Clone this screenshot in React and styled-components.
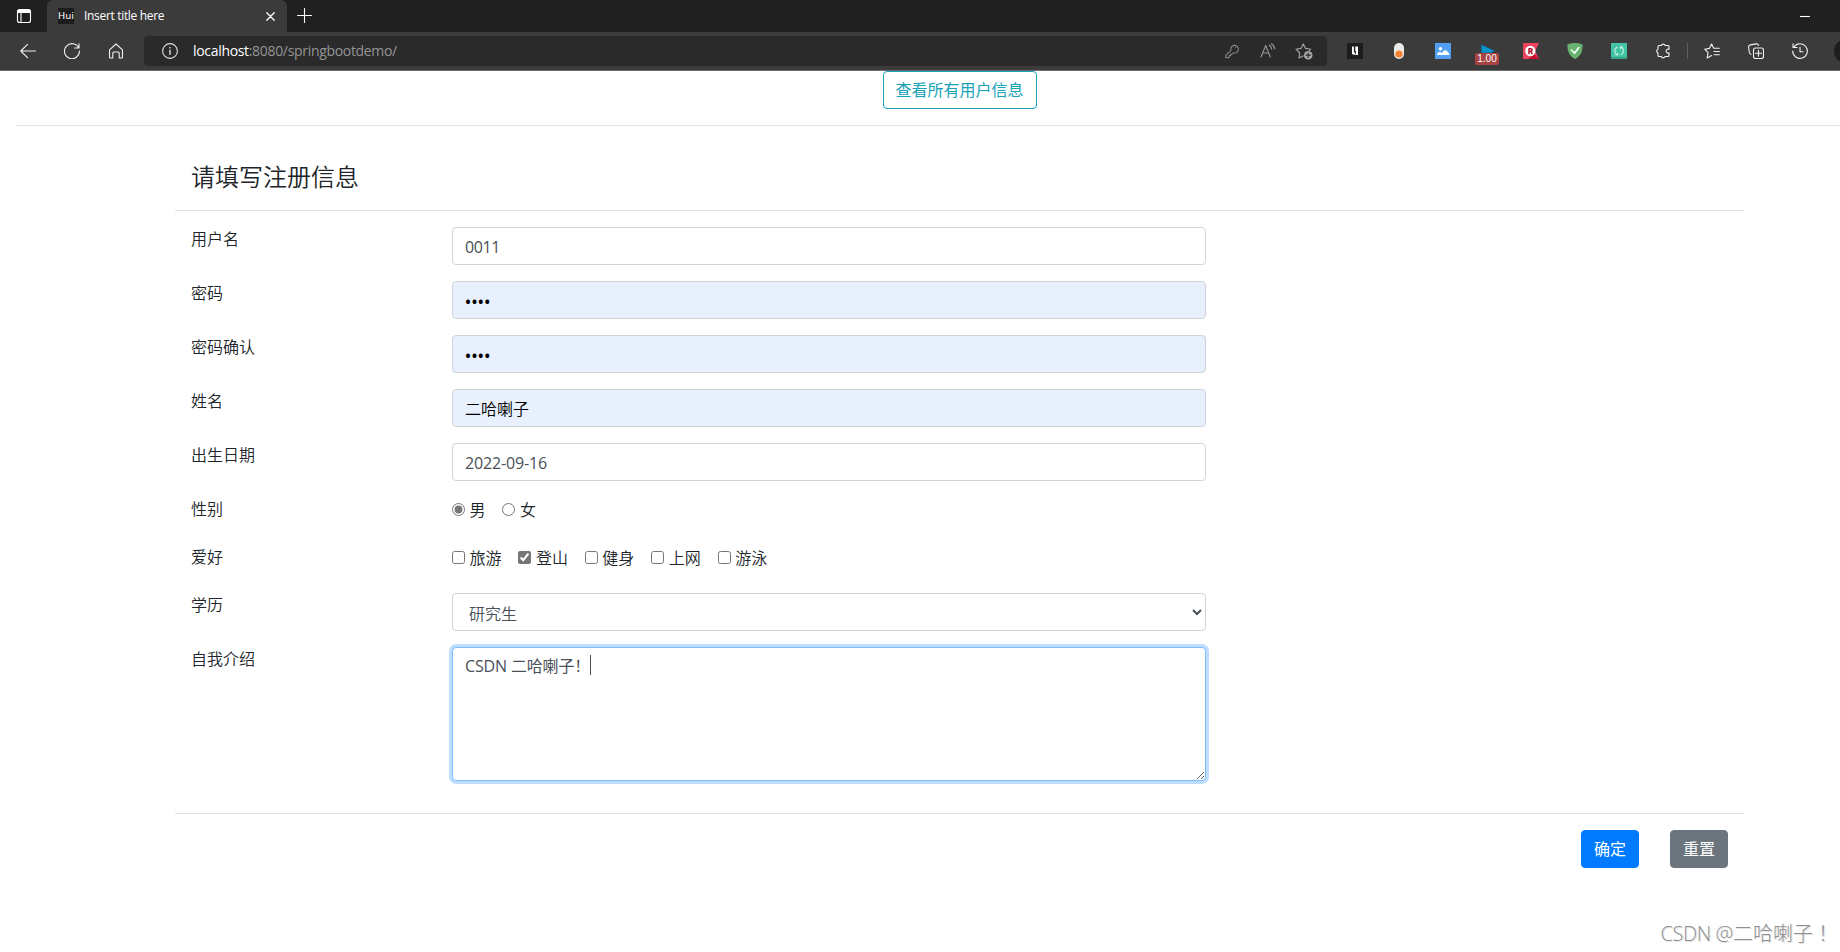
import React from "react";
import styled, { createGlobalStyle } from "styled-components";

const GlobalStyle = createGlobalStyle`
  * {
    box-sizing: border-box;
  }

  body {
    margin: 0;
    overflow: hidden;
    background: #fff;
    color: #212529;
    font-family: "Open Sans", "Noto Sans CJK SC", sans-serif;
    font-size: 16px;
    line-height: 24px;
  }
`;

// Browser window
const Window = styled.div`
  position: relative;
  width: 1840px;
  height: 952px;
  overflow: hidden;
  background: #fff;
`;

const TitleBar = styled.div`
  display: flex;
  height: 32px;
  background: #202020;
  color: #fff;
`;

const TitleCell = styled.div`
  display: flex;
  align-items: center;
  justify-content: center;
  width: ${(props) => props.$width}px;
  height: 32px;
`;

const Tab = styled.div`
  display: flex;
  align-items: center;
  width: 240px;
  padding: 0 11px;
  border-radius: 6px 6px 0 0;
  background: #3b3b3b;
  font-size: 12px;
  letter-spacing: -0.32px;
`;

const Favicon = styled.span`
  display: flex;
  align-items: center;
  justify-content: center;
  width: 16px;
  height: 16px;
  margin-right: 10px;
  background: #1d1d1f;
  font-family: "DejaVu Sans", sans-serif;
  font-size: 9.5px;
  letter-spacing: 0;
`;

const TabTitle = styled.span`
  flex: 1;
  line-height: 16px;
`;

const Toolbar = styled.div`
  display: flex;
  align-items: center;
  width: 1880px;
  height: 39px;
  padding-left: 6px;
  border-bottom: 1px solid #6c6a6b;
  background: #3b3b3b;
  color: #f2f2f2;
`;

const ToolCell = styled.div`
  display: flex;
  flex: none;
  align-items: center;
  justify-content: center;
  width: ${(props) => props.$width || 44}px;
  height: 38px;
`;

const AddressBar = styled.div`
  display: flex;
  align-items: center;
  width: 1183px;
  height: 30px;
  margin: 0 6px;
  padding: 0 5px 0 8px;
  border-radius: 4px;
  background: #2a2a2a;
  color: #959595;
`;

const Url = styled.span`
  flex: 1;
  padding-left: 5px;
  font-size: 14px;
  letter-spacing: -0.32px;

  b {
    color: #fff;
    font-weight: 400;
  }
`;

const Divider = styled.span`
  flex: none;
  width: 1px;
  height: 16px;
  margin: 0 2px;
  background: #5e5e5e;
`;

const SpeedIcon = styled.span`
  display: flex;
  flex-direction: column;
  align-items: center;
  padding-top: 7px;
`;

const SpeedBadge = styled.span`
  width: 24px;
  height: 12px;
  border-radius: 2px;
  background: #a84343;
  color: #fff;
  font-family: "Liberation Sans", sans-serif;
  font-size: 10px;
  line-height: 12px;
  text-align: center;
`;

const Avatar = styled.span`
  width: 24px;
  height: 24px;
  margin-left: 12px;
  flex: none;
  border-radius: 50%;
  background: #1e1e1e;
`;

// Page
const Page = styled.main`
  width: 1919px;
`;

const TopLine = styled.div`
  display: flex;
  justify-content: center;
  height: 55px;
  margin: 0 15px;
  border-bottom: 1px solid #e5e5e5;
`;

const Button = styled.button`
  height: 38px;
  padding: ${(props) => (props.$outline ? "0 12px" : "0")};
  width: ${(props) => (props.$outline ? "154px" : "58px")};
  border: 1px solid ${(props) => props.$color};
  border-radius: 4px;
  background: ${(props) => (props.$outline ? "#fff" : props.$color)};
  color: ${(props) => (props.$outline ? props.$color : "#fff")};
  font: inherit;
  font-weight: 400;
  white-space: nowrap;
`;

const Card = styled.form`
  width: 1569px;
  margin: 16px auto 0;
`;

const CardHeader = styled.header`
  height: 69px;
  padding: 16px;
  border-bottom: 1px solid #dee2e6;
`;

const CardTitle = styled.h4`
  margin: 0;
  font-size: 24px;
  font-weight: 350;
  line-height: 38px;
`;

const CardBody = styled.div`
  display: flex;
  flex-direction: column;
  gap: 16px;
  padding: 16px 16px 32px;
`;

const CardFooter = styled.footer`
  display: flex;
  justify-content: flex-end;
  gap: 31px;
  padding: 16px;
  border-top: 1px solid #dee2e6;
`;

const Row = styled.div`
  display: grid;
  grid-template-columns: 261px 754px;
  height: ${(props) => props.$height || 38}px;
`;

const Label = styled.label`
  font-weight: 350;
  line-height: 24px;
`;

const Input = styled.input`
  width: 100%;
  height: 38px;
  padding: ${(props) => props.$top || 0}px 12px 0;
  border: 1px solid #ced4da;
  border-radius: 4px;
  outline: none;
  background: ${(props) => (props.$filled ? "#e8f0fe" : "#fff")};
  color: ${(props) => (props.$filled ? "#000" : "#495057")};
  font: inherit;
  font-weight: ${(props) => props.$weight || 400};
  letter-spacing: ${(props) => props.$spacing || 0}px;
`;

const Select = styled.select`
  width: 100%;
  height: 38px;
  padding: 8px 12px 6px;
  border: 1px solid #ced4da;
  border-radius: 4px;
  background: #fff;
  color: #495057;
  font: inherit;
  font-weight: 350;
`;

const TextAreaBox = styled.div`
  position: relative;
  height: 134px;
`;

const TextArea = styled.textarea`
  display: block;
  width: 100%;
  height: 134px;
  padding: 6px 12px;
  border: 1px solid #80bdff;
  border-radius: 4px;
  outline: 0;
  box-shadow: 0 0 0 3px #bfdeff;
  color: #495057;
  font: inherit;
  letter-spacing: -0.15px;
`;

const Caret = styled.span`
  position: absolute;
  top: 8px;
  left: 138px;
  width: 1px;
  height: 20px;
  background: #495057;
`;

const Choices = styled.div`
  display: flex;
  align-items: flex-start;
  gap: 16.9px;
`;

const Choice = styled.label`
  display: flex;
  align-items: center;
  height: 25px;
  font-weight: 350;

  input {
    width: 13px;
    height: 13px;
    margin: 0 4.5px 0 0;
    accent-color: #767676;
  }
`;

const Watermark = styled.div`
  position: absolute;
  left: 1660.5px;
  top: 920px;
  color: #8f8f8f;
  font-family: "Open Sans", "Noto Sans CJK TC", sans-serif;
  font-size: 20px;
  font-weight: 300;
  line-height: 28px;
  text-shadow: 1px 1px 0 #e2e2e2;
  white-space: nowrap;
`;

const WatermarkSite = styled.span`
  letter-spacing: -0.4px;
`;

const Icon = ({ size = 16, children, ...rest }) => (
  <svg
    width={size}
    height={size}
    viewBox={`0 0 ${size} ${size}`}
    fill="none"
    stroke="currentColor"
    strokeWidth="1.1"
    strokeLinecap="round"
    strokeLinejoin="round"
    {...rest}
  >
    {children}
  </svg>
);

const Browser = () => (
  <>
    <TitleBar>
      <TitleCell $width={47}>
        <Icon>
          <rect x="1.5" y="1.5" width="13" height="13" rx="2" />
          <path d="M2 2.5h12v2H2z" fill="currentColor" />
          <path d="M5 5v9" />
        </Icon>
      </TitleCell>
      <Tab>
        <Favicon>Hui</Favicon>
        <TabTitle>Insert title here</TabTitle>
        <Icon size={10} strokeWidth="1.3">
          <path d="M.8 1.8l7.4 7.4M8.2 1.8L.8 9.2" />
        </Icon>
      </Tab>
      <TitleCell $width={34}>
        <Icon>
          <path d="M8.5 .5v14M1.5 7.5h14" />
        </Icon>
      </TitleCell>
      <TitleCell $width={1479} />
      <TitleCell $width={10}>
        <Icon size={10} strokeLinecap="butt">
          <path d="M0 5.5h10" />
        </Icon>
      </TitleCell>
    </TitleBar>
    <Toolbar>
      <ToolCell>
        <Icon>
          <path d="M15.5 8H.8M7.5 1.3L.8 8l6.7 6.7" />
        </Icon>
      </ToolCell>
      <ToolCell>
        <Icon>
          <path d="M14.8 5A7.5 7.5 0 1 0 15.5 8M15 .8V5h-4.3" />
        </Icon>
      </ToolCell>
      <ToolCell>
        <Icon>
          <path d="M1.5 6.8L8 1l6.5 5.8V14a1 1 0 0 1-1 1h-2.3V10a1 1 0 0 0-1-1H5.8a1 1 0 0 0-1 1v5H2.5a1 1 0 0 1-1-1z" />
        </Icon>
      </ToolCell>
      <AddressBar>
        <ToolCell $width={36}>
          <Icon color="#e0e0e0">
            <circle cx="8" cy="8" r="7.4" />
            <path d="M8 7.2v4M8 4.5v.4" strokeWidth="1.4" />
          </Icon>
        </ToolCell>
        <Url>
          <b>localhost</b>:8080/springbootdemo/
        </Url>
        <ToolCell $width={36}>
          <Icon color="#858585">
            <path d="M7 7.4a3.8 3.8 0 1 1 2.4 2.4L8 11.2H6.7v1.4H5.3V14L4.5 14.6H1.8v-2.2zM11.4 4.6h.1" />
          </Icon>
        </ToolCell>
        <ToolCell $width={36}>
          <Icon color="#979797">
            <path d="M1 14L5.7 2.5 10.3 14M2.6 10h6M9.3 2.2a5 5 0 0 1 2.4 4M11.5.8a8 8 0 0 1 3.3 5" />
          </Icon>
        </ToolCell>
        <ToolCell $width={36}>
          <Icon size={18} color="#a6a6a6">
            <path d="M8 14l-4 2 .7-5L1 7.2l5-.8L8.3 2l2.3 4.4 5 .8-1.2 1.3" />
            <circle cx="13.2" cy="13.2" r="4.3" fill="currentColor" stroke="none" />
            <path d="M13.2 11v4.4M11 13.2h4.4" stroke="#2a2a2a" strokeWidth="1.2" />
          </Icon>
        </ToolCell>
      </AddressBar>
      <ToolCell>
        <Icon stroke="none">
          <path d="M0 0h16v16H0z" fill="#1c1c1c" />
          <path d="M5 3.5h1.9v6h1.4v1.8H5zM8.3 3.5H11V12H6.2v-.5h2.9V8.2h-.8z" fill="#fff" />
        </Icon>
      </ToolCell>
      <ToolCell>
        <Icon>
          <rect x="3" y="0" width="10" height="16" rx="5" fill="#ecebe6" stroke="none" />
          <circle cx="8" cy="11" r="3.6" fill="#f28133" stroke="none" />
        </Icon>
      </ToolCell>
      <ToolCell>
        <Icon stroke="none">
          <path d="M0 0h16v16H0z" fill="#529ff4" />
          <circle cx="5.5" cy="5.7" r="1.7" fill="#fff" />
          <path d="M2 12c0-3 3.5-4 5-1.7C8.2 6.4 12.2 6.2 12.7 9.2c1.2.2 1.5 1.4 1.4 2.8z" fill="#fff" />
        </Icon>
      </ToolCell>
      <ToolCell>
        <SpeedIcon>
          <svg width="16" height="9" viewBox="0 0 16 9">
            <path d="M2.2 .4L15.8 6.8 12 9H2.2z" fill="#0a93c9" stroke="#134a60" strokeWidth="0.5" />
          </svg>
          <SpeedBadge>1.00</SpeedBadge>
        </SpeedIcon>
      </ToolCell>
      <ToolCell>
        <Icon stroke="none">
          <path d="M0 0h16l-4 8 4 8H0z" fill="#f04460" />
          <path d="M11.3 11L16 16H5z" fill="#c90d2b" />
          <circle cx="7.3" cy="8" r="5.2" fill="#fff" />
          <path d="M6 10.6V5.8h1.8a1.3 1.3 0 0 1 0 2.6H6M7.8 8.4l1.3 2.2" fill="none" stroke="#b31d33" strokeWidth="1.6" />
        </Icon>
      </ToolCell>
      <ToolCell>
        <Icon stroke="none">
          <path d="M8 0c2.5 0 5 .5 7.6 1.4C15.8 8.5 13.5 13 8 16 2.5 13 .2 8.5.4 1.4 3 .5 5.5 0 8 0z" fill="#67b26f" />
          <path d="M4.5 7l3 3.3 4.3-5.8" fill="none" stroke="#fff" strokeWidth="1.5" />
        </Icon>
      </ToolCell>
      <ToolCell>
        <Icon stroke="none">
          <path d="M0 0h16v16H0z" fill="#42c3a3" />
          <path d="M0 14h16v2H0z" fill="#34a78e" />
          <path d="M6.6 11.9A4.2 4.2 0 0 1 6.2 4.2M9.4 3.9a4.2 4.2 0 0 1 .6 7.8M4.8 12h1.9v-1.8M11.4 3.9H9.4v1.8" fill="none" stroke="#c4eee4" />
        </Icon>
      </ToolCell>
      <ToolCell>
        <Icon>
          <path d="M4 2.5h2.3a2 2 0 0 1 3.8 0H13a1 1 0 0 1 1 1v2.8a2 2 0 1 0 0 3.6v2.6a1 1 0 0 1-1 1h-2.9a2 2 0 0 1-3.8 0H4a1 1 0 0 1-1-1V10a2 2 0 0 1 0-3.8V3.5a1 1 0 0 1 1-1z" />
        </Icon>
      </ToolCell>
      <Divider />
      <ToolCell>
        <Icon>
          <path d="M7.6 12.6l-4.4 2.3.9-5.2L.7 6.2l4.7-.8L7.6 1l2.1 4.3h5.6M10 8.5h5.3M10.2 11.8h5.1" />
        </Icon>
      </ToolCell>
      <ToolCell>
        <Icon>
          <path d="M3 11.5C1.7 11 1.5 10.2 1.3 9L.6 4.5C.4 3 1 2.2 2.4 1.9L8 .9c1.4-.2 2.2.2 2.6 1.5M5.5 7A2 2 0 0 1 7.5 5h6a2 2 0 0 1 2 2v6.5a2 2 0 0 1-2 2h-6a2 2 0 0 1-2-2zM10.5 7.3v5.9M7.5 10.2h6" />
        </Icon>
      </ToolCell>
      <ToolCell>
        <Icon>
          <path d="M1.8 4.2A7.3 7.3 0 1 1 .7 8M1 .8v3.7h4M8 4.3v4.5h3" />
        </Icon>
      </ToolCell>
      <Avatar />
    </Toolbar>
  </>
);

const Field = ({ label, height, children }) => (
  <Row $height={height}>
    <Label>{label}</Label>
    {children}
  </Row>
);

const hobbies = ["旅游", "登山", "健身", "上网", "游泳"];

const App = () => {
  return (
    <Window>
      <GlobalStyle />
      <Browser />
      <Page>
        <TopLine>
          <Button type="button" $outline $color="#17a2b8">查看所有用户信息</Button>
        </TopLine>

        <Card onSubmit={(e) => e.preventDefault()}>
          <CardHeader>
            <CardTitle>请填写注册信息</CardTitle>
          </CardHeader>

          <CardBody>
            <Field label="用户名">
              <Input defaultValue="0011" $top={2} $spacing={-0.4} />
            </Field>
            <Field label="密码">
              <Input type="password" defaultValue="0011" $filled $top={3} $weight={600} $spacing={0.4} />
            </Field>
            <Field label="密码确认">
              <Input type="password" defaultValue="0011" $filled $top={3} $weight={600} $spacing={0.4} />
            </Field>
            <Field label="姓名">
              <Input defaultValue="二哈喇子" $filled $weight={350} />
            </Field>
            <Field label="出生日期">
              <Input defaultValue="2022-09-16" $top={2} $spacing={-0.15} />
            </Field>
            <Field label="性别" height={32}>
              <Choices>
                {["男", "女"].map((name) => (
                  <Choice key={name}>
                    <input type="radio" name="sex" defaultChecked={name === "男"} />
                    {name}
                  </Choice>
                ))}
              </Choices>
            </Field>
            <Field label="爱好" height={32}>
              <Choices>
                {hobbies.map((name) => (
                  <Choice key={name}>
                    <input type="checkbox" defaultChecked={name === "登山"} />
                    {name}
                  </Choice>
                ))}
              </Choices>
            </Field>
            <Field label="学历">
              <Select defaultValue="研究生">
                <option>研究生</option>
              </Select>
            </Field>
            <Field label="自我介绍" height={134}>
              <TextAreaBox>
                <TextArea defaultValue="CSDN 二哈喇子！" spellCheck={false} />
                <Caret />
              </TextAreaBox>
            </Field>
          </CardBody>

          <CardFooter>
            <Button type="submit" $color="#007bff">确定</Button>
            <Button type="reset" $color="#6c757d">重置</Button>
          </CardFooter>
        </Card>
      </Page>
      <Watermark>
        <WatermarkSite>CSDN @</WatermarkSite>二哈喇子！
      </Watermark>
    </Window>
  );
};

export default App;
